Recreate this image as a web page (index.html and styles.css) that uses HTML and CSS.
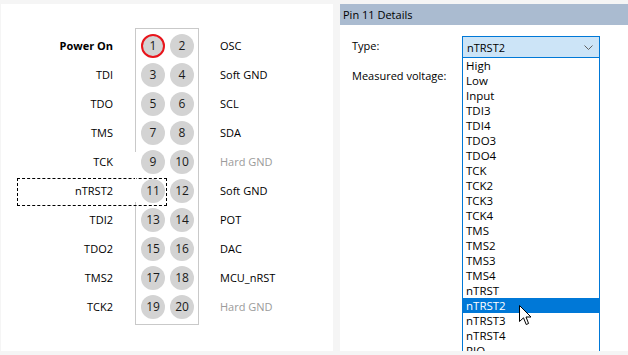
FILE: index.html
```html
<!DOCTYPE html>
<html lang="en">
<head>
    <meta charset="UTF-8">
    <meta name="viewport" content="width=device-width, initial-scale=1.0">
    <title>Pinout</title>
    <link rel="stylesheet" href="styles.css">
</head>
<body>
    <div class="window">
        <section class="pinout">
            <div class="labels labels-left">
                <div class="label strong">Power On</div>
                <div class="label">TDI</div>
                <div class="label">TDO</div>
                <div class="label">TMS</div>
                <div class="label">TCK</div>
                <div class="label">nTRST2</div>
                <div class="label">TDI2</div>
                <div class="label">TDO2</div>
                <div class="label">TMS2</div>
                <div class="label">TCK2</div>
            </div>

            <div class="header-box">
                <div class="pin active">1</div><div class="pin">2</div>
                <div class="pin">3</div><div class="pin">4</div>
                <div class="pin">5</div><div class="pin">6</div>
                <div class="pin">7</div><div class="pin">8</div>
                <div class="pin">9</div><div class="pin">10</div>
                <div class="pin">11</div><div class="pin">12</div>
                <div class="pin">13</div><div class="pin">14</div>
                <div class="pin">15</div><div class="pin">16</div>
                <div class="pin">17</div><div class="pin">18</div>
                <div class="pin">19</div><div class="pin">20</div>
            </div>

            <div class="labels labels-right">
                <div class="label">OSC</div>
                <div class="label">Soft GND</div>
                <div class="label">SCL</div>
                <div class="label">SDA</div>
                <div class="label muted">Hard GND</div>
                <div class="label">Soft GND</div>
                <div class="label">POT</div>
                <div class="label">DAC</div>
                <div class="label">MCU_nRST</div>
                <div class="label muted">Hard GND</div>
            </div>

            <!-- keyboard focus rectangle around the selected row -->
            <div class="focus"></div>
        </section>

        <section class="details">
            <div class="details-title">Pin 11 Details</div>
            <div class="fields">
                <div class="field-label">Type:</div>
                <div class="combo">
                    <span>nTRST2</span>
                    <svg class="chevron" width="9" height="5" viewBox="0 0 9 5">
                        <path d="M0.5 0.5 L4.5 4.5 L8.5 0.5" fill="none" stroke="#606060" stroke-width="1"/>
                    </svg>
                </div>
                <div class="field-label">Measured voltage:</div>
                <div></div>
            </div>

            <ul class="dropdown">
                <li>High</li>
                <li>Low</li>
                <li>Input</li>
                <li>TDI3</li>
                <li>TDI4</li>
                <li>TDO3</li>
                <li>TDO4</li>
                <li>TCK</li>
                <li>TCK2</li>
                <li>TCK3</li>
                <li>TCK4</li>
                <li>TMS</li>
                <li>TMS2</li>
                <li>TMS3</li>
                <li>TMS4</li>
                <li>nTRST</li>
                <li class="selected">nTRST2</li>
                <li>nTRST3</li>
                <li>nTRST4</li>
                <li>PIO</li>
            </ul>

            <svg class="cursor" width="14" height="22" viewBox="0 0 14 22">
                <path d="M0.5 0.5 L0.5 16.5 L4.5 12.8 L7.2 19.5 L9.6 18.5 L7 12 L12 12 Z" fill="#fff" stroke="#000" stroke-width="1" stroke-linejoin="miter"/>
            </svg>
        </section>
    </div>
</body>
</html>
```

FILE: styles.css
```css
body {
    margin: 0;
    background-color: #f5f5f5;
    font-family: 'Open Sans', 'Segoe UI', sans-serif;
    font-size: 11px;
    color: #000;
    overflow: hidden;
}

.window {
    display: flex;
    gap: 7px;
    padding: 4px 0 0 1px;
    height: 347px;
}

/* left: connector pinout */

.pinout {
    position: relative;
    width: 332px;
    height: 347px;
    background-color: #fff;
    display: flex;
    align-items: flex-start;
    padding-top: 24px;
    box-sizing: border-box;
}

.labels {
    padding-top: 3px;
}

.label {
    height: 29px;
    line-height: 29px;
    white-space: nowrap;
}

.labels-left {
    width: 112px;
    text-align: right;
    margin-right: 22px;
}

.labels-right {
    margin-left: 21px;
}

.strong {
    font-weight: bold;
}

.muted {
    color: #9b9b9b;
}

.header-box {
    width: 64px;
    box-sizing: border-box;
    border: 1px solid #c9c9c9;
    padding: 2px 4px 3px 5px;
    display: grid;
    grid-template-columns: 24px 24px;
    grid-auto-rows: 29px;
    column-gap: 5px;
    align-items: center;
}

.pin {
    width: 24px;
    height: 24px;
    border-radius: 50%;
    background-color: #d3d3d3;
    color: #1a1a1a;
    font-size: 12px;
    text-align: center;
    line-height: 24px;
    box-sizing: border-box;
}

.pin.active {
    border: 2px solid #e8141b;
    line-height: 20px;
}

.focus {
    position: absolute;
    left: 16px;
    top: 174px;
    width: 150px;
    height: 28px;
    box-sizing: border-box;
    border: 1px dashed #000;
}

.focus::before {
    content: "";
    position: absolute;
    left: 117px;
    top: -27px;
    width: 1px;
    height: 50px;
    background-color: #fff;
}

/* right: pin details */

.details {
    position: relative;
    flex: 1;
    height: 347px;
    background-color: #fff;
}

.details-title {
    height: 21px;
    line-height: 21px;
    padding-left: 3px;
    background-color: #aabbd0;
}

.fields {
    display: grid;
    grid-template-columns: 110px 138px;
    grid-auto-rows: 22px;
    row-gap: 8px;
    padding: 11px 0 0 12px;
    align-items: center;
}

.field-label {
    line-height: 16px;
    margin-top: -3px;
}

.combo {
    height: 22px;
    box-sizing: border-box;
    border: 1px solid #0078d7;
    background-color: #cce4f7;
    display: flex;
    align-items: center;
    justify-content: space-between;
    padding: 0 6px 0 4px;
}

.chevron {
    display: block;
}

.dropdown {
    position: absolute;
    left: 122px;
    top: 53px;
    width: 138px;
    margin: 0;
    padding: 0;
    list-style: none;
    box-sizing: border-box;
    border: 1px solid #0078d7;
    background-color: #fff;
}

.dropdown li {
    height: 15px;
    line-height: 15px;
    padding-left: 3px;
    font-size: 11.5px;
}

.dropdown li.selected {
    background-color: #0078d7;
    color: #fff;
}

.cursor {
    position: absolute;
    left: 179px;
    top: 301px;
}
```
